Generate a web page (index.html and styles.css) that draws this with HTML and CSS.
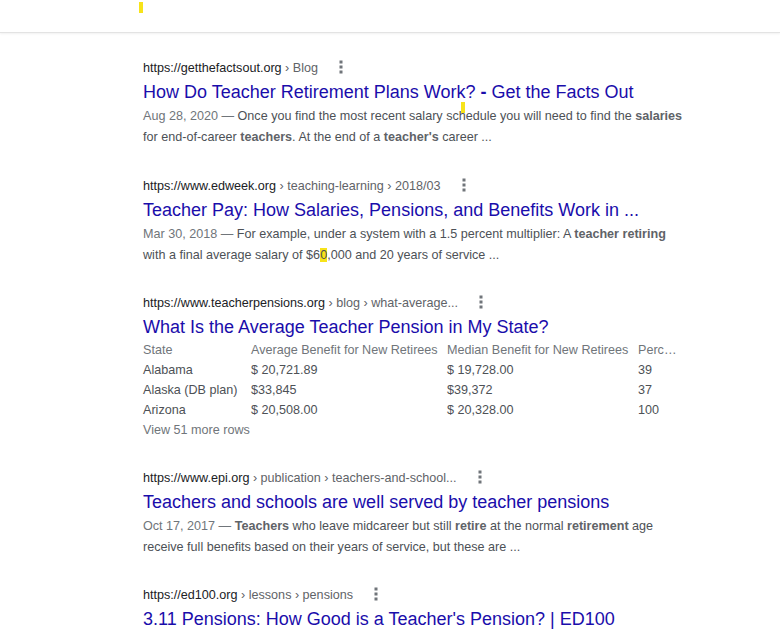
FILE: index.html
```html
<!DOCTYPE html>
<html lang="en">
<head>
<meta charset="utf-8">
<title>teacher pension - Search</title>
<link rel="stylesheet" href="styles.css">
</head>
<body>
<header class="topbar"><span class="cursor cursor-top"></span></header>
<main class="results">
  <div class="result">
    <div class="cite"><span class="domain">https://getthefactsout.org</span><span class="crumb"> › Blog</span><svg class="dots" width="4" height="14" viewBox="0 0 4 14"><rect x="0.5" y="0.5" width="3" height="3"/><rect x="0.5" y="5.5" width="3" height="3"/><rect x="0.5" y="10.5" width="3" height="3"/></svg></div>
    <a class="title" href="#">How Do Teacher Retirement Plans Work<span class="caret-host">?<span class="cursor cursor-title"></span></span> <b class="dash">-</b> Get the Facts Out</a>
    <div class="snippet"><span class="date">Aug 28, 2020 — </span>Once you find the most recent salary schedule you will need to find the <b>salaries</b> for end-of-career <b>teachers</b>. At the end of a <b>teacher's</b> career ...</div>
  </div>
  <div class="result">
    <div class="cite"><span class="domain">https://www.edweek.org</span><span class="crumb"> › teaching-learning › 2018/03</span><svg class="dots" width="4" height="14" viewBox="0 0 4 14"><rect x="0.5" y="0.5" width="3" height="3"/><rect x="0.5" y="5.5" width="3" height="3"/><rect x="0.5" y="10.5" width="3" height="3"/></svg></div>
    <a class="title" href="#">Teacher Pay: How Salaries, Pensions, and Benefits Work in ...</a>
    <div class="snippet"><span class="date">Mar 30, 2018 — </span>For example, under a system with a 1.5 percent multiplier: A <b>teacher retiring</b> with a final average salary of $6<mark class="hl">0</mark>,000 and 20 years of service ...</div>
  </div>
  <div class="result">
    <div class="cite"><span class="domain">https://www.teacherpensions.org</span><span class="crumb"> › blog › what-average...</span><svg class="dots" width="4" height="14" viewBox="0 0 4 14"><rect x="0.5" y="0.5" width="3" height="3"/><rect x="0.5" y="5.5" width="3" height="3"/><rect x="0.5" y="10.5" width="3" height="3"/></svg></div>
    <a class="title" href="#">What Is the Average Teacher Pension in My State?</a>
    <div class="table">
      <div class="th">State</div><div class="th">Average Benefit for New Retirees</div><div class="th">Median Benefit for New Retirees</div><div class="th trunc">Perc…</div>
      <div>Alabama</div><div>$ 20,721.89</div><div>$ 19,728.00</div><div>39</div>
      <div>Alaska (DB plan)</div><div>$33,845</div><div>$39,372</div><div>37</div>
      <div>Arizona</div><div>$ 20,508.00</div><div>$ 20,328.00</div><div>100</div>
    </div>
    <div class="more">View 51 more rows</div>
  </div>
  <div class="result">
    <div class="cite"><span class="domain">https://www.epi.org</span><span class="crumb"> › publication › teachers-and-school...</span><svg class="dots" width="4" height="14" viewBox="0 0 4 14"><rect x="0.5" y="0.5" width="3" height="3"/><rect x="0.5" y="5.5" width="3" height="3"/><rect x="0.5" y="10.5" width="3" height="3"/></svg></div>
    <a class="title" href="#">Teachers and schools are well served by teacher pensions</a>
    <div class="snippet"><span class="date">Oct 17, 2017 — </span><b>Teachers</b> who leave midcareer but still <b>retire</b> at the normal <b>retirement</b> age receive full benefits based on their years of service, but these are ...</div>
  </div>
  <div class="result">
    <div class="cite"><span class="domain">https://ed100.org</span><span class="crumb"> › lessons › pensions</span><svg class="dots" width="4" height="14" viewBox="0 0 4 14"><rect x="0.5" y="0.5" width="3" height="3"/><rect x="0.5" y="5.5" width="3" height="3"/><rect x="0.5" y="10.5" width="3" height="3"/></svg></div>
    <a class="title" href="#">3.11 Pensions: How Good is a Teacher's Pension? | ED100</a>
  </div>
</main>
</body>
</html>
```

FILE: styles.css
```css
html, body {
  margin: 0;
  padding: 0;
  background: #fff;
  font-family: "Liberation Sans", Arial, sans-serif;
}

.topbar {
  position: relative;
  height: 32px;
  border-bottom: 1px solid #e3e3e3;
  box-shadow: 0 1px 2px rgba(0, 0, 0, 0.06);
  background: #fff;
}

.cursor {
  position: absolute;
  width: 4px;
  height: 11px;
  background: #f7e31a;
}

.cursor-top {
  left: 139px;
  top: 2px;
}

.caret-host {
  position: relative;
}

.cursor-title {
  left: -4px;
  top: 20px;
}

.results {
  padding: 24px 0 0 143px;
}

.result {
  margin-bottom: 26.5px;
  width: 560px;
}

.cite {
  height: 22px;
  font-size: 12.6px;
  line-height: 22px;
  white-space: nowrap;
}

.domain {
  color: #202124;
}

.crumb {
  color: #5f6368;
}

.dots {
  margin-left: 21px;
  vertical-align: -2px;
  fill: #70757a;
}

.title {
  display: block;
  font-size: 18px;
  line-height: 26px;
  color: #1a0dab;
  text-decoration: none;
  white-space: nowrap;
}

.dash {
  font-weight: bold;
}

.snippet {
  margin-top: 1px;
  font-size: 12.6px;
  line-height: 21px;
  color: #4d5156;
  width: 545px;
}

.snippet b {
  color: #5f6368;
  font-weight: bold;
}

.date {
  color: #70757a;
}

.hl {
  background: #f7e31a;
  color: #4d5156;
}

.table {
  display: grid;
  grid-template-columns: 108px 196px 191px 42px;
  font-size: 12.6px;
  line-height: 20px;
  color: #4d5156;
  white-space: nowrap;
}

.th {
  color: #70757a;
}

.trunc {
  overflow: hidden;
}

.more {
  font-size: 12.6px;
  line-height: 20px;
  color: #70757a;
}
```
